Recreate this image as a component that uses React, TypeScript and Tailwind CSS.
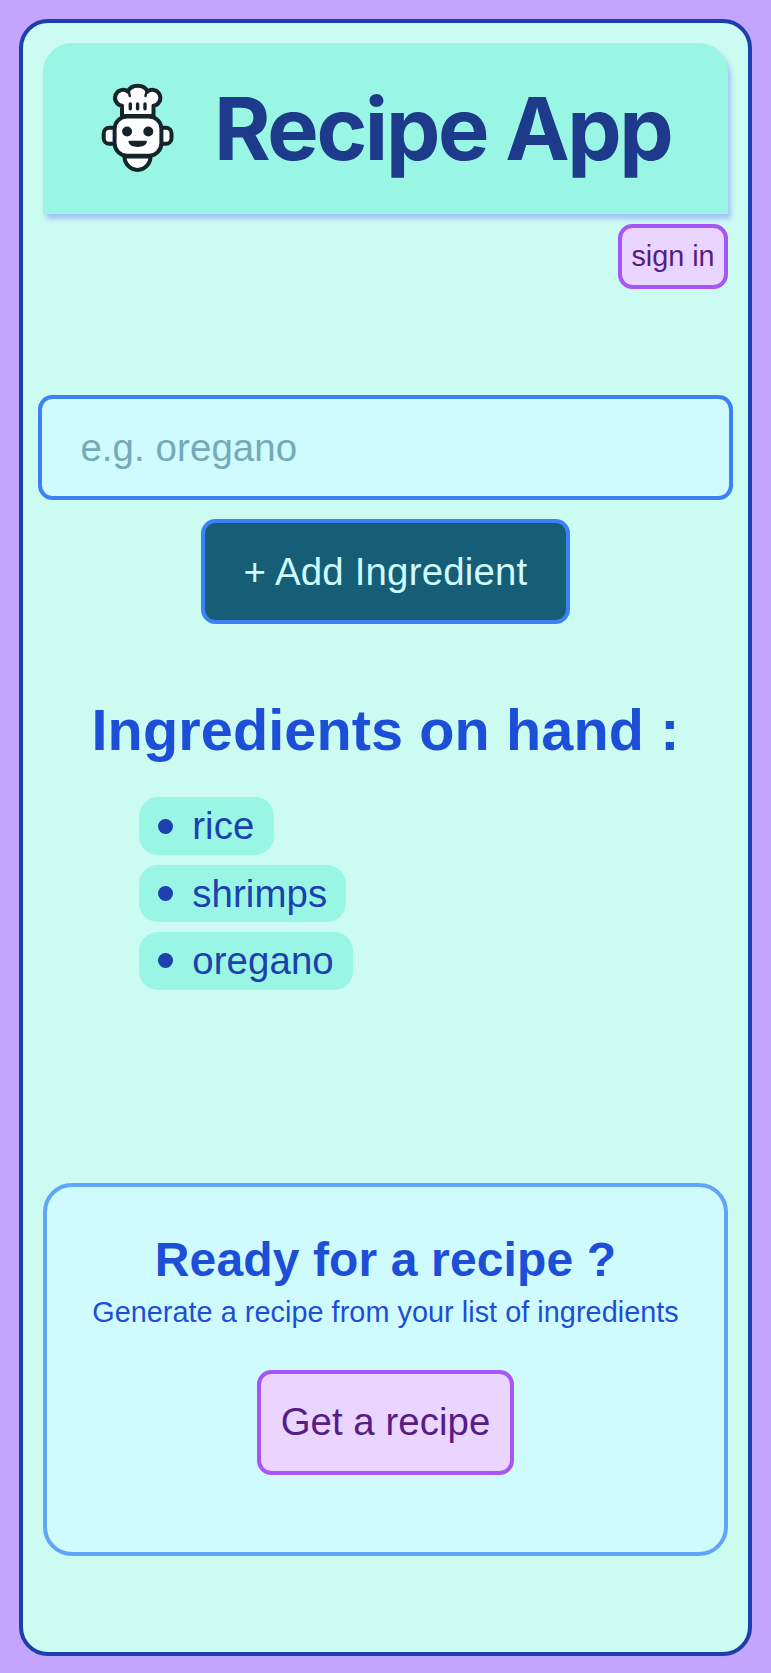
import React from "react";

function ChefBot() {
  return (
    <svg viewBox="0 0 110 110" className="-mt-[7px] h-[110px] w-[110px] shrink-0" fill="#fff" stroke="#15242b" strokeWidth="4" strokeLinejoin="round" strokeLinecap="round">
      <path d="M44.500 86.500a13 13.400 0 0 0 26 0z" />
      <rect x="23.700" y="57.700" width="14" height="16" rx="5.500" />
      <rect x="77.500" y="57.700" width="14" height="16" rx="5.500" />
      <path d="M42 46V35.800A8 8 0 1 1 48 21.600A10.200 8.500 0 0 1 67.400 21.600A8 8 0 1 1 73.500 35.800V46z" />
      <path d="M49 22.500l.8 3.500M66.300 22.500l-.8 3.500" strokeWidth="2.500" />
      <path d="M50.300 34v4.700M57.600 34v4.700M65 34v4.700" strokeWidth="3.400" />
      <rect x="34.600" y="46.500" width="46.800" height="39.300" rx="12.500" />
      <circle cx="47.100" cy="61.500" r="5" fill="#15242b" stroke="none" />
      <circle cx="68.300" cy="61.500" r="5" fill="#15242b" stroke="none" />
      <path d="M49.700 72h16c-1.500 5-14.500 5-16 0z" fill="#15242b" strokeWidth="2.500" />
    </svg>
  );
}

const ingredients = ["rice", "shrimps", "oregano"];

export default function App() {
  return (
    <div className="h-[1673px] bg-[#c4a5fd] px-[19px] pt-[19px] font-['Liberation_Sans',Arial,sans-serif]">
      <main className="flex h-[1637px] flex-col items-center rounded-[29px] border-4 border-[#1c3faf] bg-[#ccfbf1] px-5 pt-5">
        <header className="flex h-[171px] w-full items-center rounded-t-[29px] bg-[#99f6e4] pl-[37px] shadow-[3px_5px_5px_0px_#a5c4f6]">
          <ChefBot />
          <h1 className="mt-[2px] ml-[24px] whitespace-nowrap font-['Inter',sans-serif] text-[86.4px] leading-none font-bold tracking-[-0.0275em] text-[#1e3a8a]">Recipe App</h1>
        </header>
        <button className="mt-[10px] h-[65px] w-[110px] self-end rounded-[14.4px] border-4 border-[#a855f7] bg-[#e9d5ff] text-[28.8px] whitespace-nowrap text-[#581c87]">sign in</button>
        <form className="-mx-[5px] mt-[106px] flex w-[695px] flex-col items-center gap-[19px]" onSubmit={(e) => e.preventDefault()}>
          <input aria-label="Add ingredient" placeholder="e.g. oregano" className="h-[105px] w-full rounded-[14.4px] border-4 border-[#3b82f6] bg-[#cffafe] px-[38.4px] text-[38.4px] tracking-[0.1px] text-[#155e75] placeholder:text-[#73abb9]" />
          <button className="h-[105px] w-[369px] rounded-[14.4px] border-4 border-[#3b82f6] bg-[#155e75] text-[38.4px] tracking-[0.2px] whitespace-nowrap text-[#cffafe]">+ Add Ingredient</button>
        </form>
        <section className="w-full">
          <h2 className="mt-[77px] text-center text-[57.6px] leading-[58px] font-bold tracking-[0.12px] whitespace-nowrap text-[#1d4ed8]">Ingredients on hand :</h2>
          <ul className="mt-[38.4px] ml-24 flex flex-col items-start gap-[9.8px] text-[38.4px] leading-[57.6px] text-[#1e40af]">
            {ingredients.map((name) => (
              <li key={name} className="flex items-center rounded-[19px] bg-[#99f6e4] px-[19.2px] tracking-[0.1px]">
                <span className="mr-[19px] h-[15px] w-[15px] rounded-full bg-[#1e40af]" />
                {name}
              </li>
            ))}
          </ul>
        </section>
        <section className="mt-[193px] flex h-[373px] w-full flex-col items-center rounded-[29px] border-4 border-[#60a5fa] bg-[#cffafe] pt-[45px] text-[#1d4ed8]">
          <h2 className="text-[48px] leading-[56px] font-bold tracking-[0.13px] whitespace-nowrap">Ready for a recipe ?</h2>
          <p className="mt-[5px] text-[28.8px] leading-[38.4px] tracking-[0.05px] whitespace-nowrap">Generate a recipe from your list of ingredients</p>
          <button className="mt-[38.6px] h-[105px] w-[257px] rounded-[14.4px] border-4 border-[#a855f7] bg-[#e9d5ff] text-[38.4px] tracking-[0.05px] whitespace-nowrap text-[#581c87]">Get a recipe</button>
        </section>
      </main>
    </div>
  );
}
